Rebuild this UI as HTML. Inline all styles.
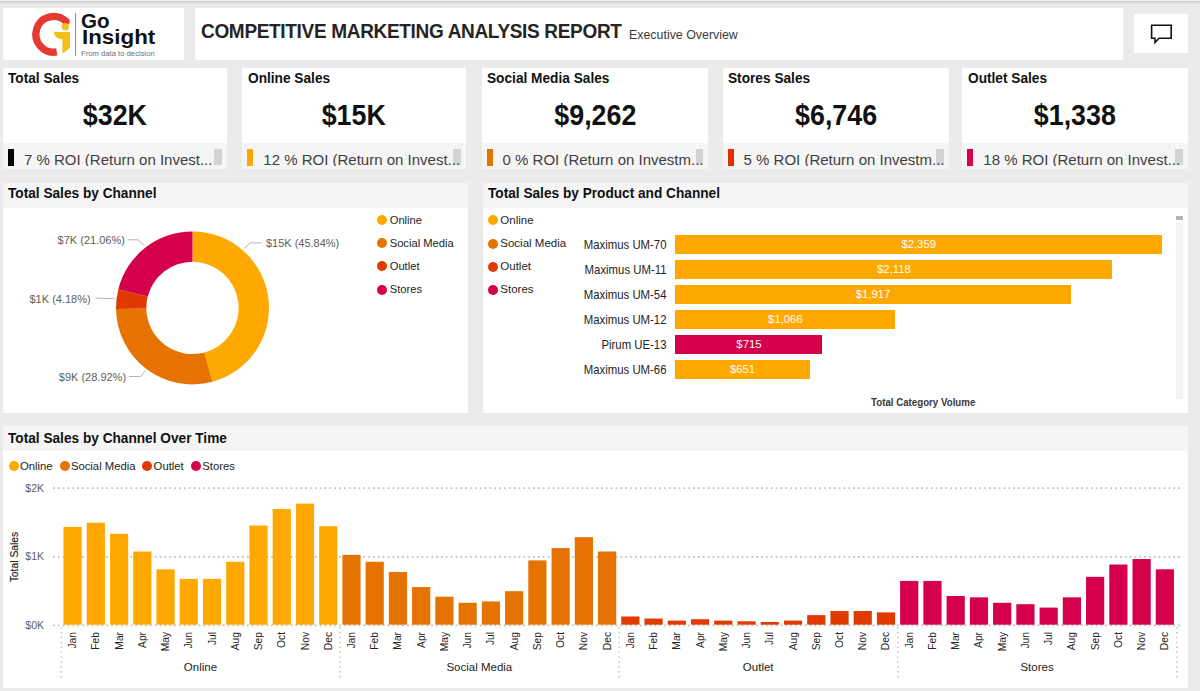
<!DOCTYPE html><html><head><meta charset="utf-8"><style>
*{margin:0;padding:0;box-sizing:border-box}
html,body{width:1200px;height:691px;overflow:hidden;background:#EBEBEB;font-family:"Liberation Sans", sans-serif;color:#252423}
.a{position:absolute}
.card{position:absolute;background:#fff}
.t{position:absolute;white-space:nowrap;line-height:1}
.b{font-weight:bold}
</style></head><body>
<div class="a" style="left:0;top:0;width:1200px;height:6px;background:linear-gradient(#f2f2f2 0px,#f2f2f2 1px,#cdcdcd 1px,#cdcdcd 2px,#dadada 2px,#dadada 3px,#e2e2e2 3px,#e2e2e2 4px,#e8e8e8 4px,#e8e8e8 5px,#EBEBEB 5px)"></div>

<div class="card" style="left:3px;top:8px;width:181px;height:52px"></div>
<svg class="a" style="left:0;top:0" width="200" height="70" viewBox="0 0 200 70">
<path d="M56.76 51.94 A17.85 17.85 0 1 1 66.03 21.4" fill="none" stroke="#E43A33" stroke-width="7.3"/>
<circle cx="66.03" cy="21.4" r="3.65" fill="#E43A33"/>
<circle cx="65.3" cy="26.7" r="3.65" fill="#F2C018"/>
<path d="M53.7 32.1 L70 32.1 L70 47.8 L62.4 53.75 L62.4 39.3 Q55 39.5 53.7 32.1 Z" fill="#F2C018"/>
<rect x="75.1" y="13.1" width="1" height="42.7" fill="#8a8a8a"/>
</svg>
<div class="t b" style="left:81px;top:10px;font-size:21px;color:#111;transform-origin:0 0;transform:scaleX(0.98)">Go</div>
<div class="t b" style="left:82px;top:26.5px;font-size:20.5px;color:#111;transform-origin:0 0;transform:scaleX(1.09)">Insight</div>
<div class="t" style="left:80.5px;top:50.8px;font-size:6.4px;color:#707070;transform-origin:0 0;transform:scaleX(1.2)">From data to decision</div>
<div class="card" style="left:195px;top:8px;width:928px;height:52px"></div>
<div class="t b" style="left:200.5px;top:21px;font-size:20px;color:#252423;letter-spacing:-0.35px;transform-origin:0 0;transform:scaleX(0.951)">COMPETITIVE MARKETING ANALYSIS REPORT</div>
<div class="t" style="left:629px;top:28.9px;font-size:12.4px;color:#3b3b3b">Executive Overview</div>
<div class="card" style="left:1134px;top:14px;width:54px;height:39px"></div>
<svg class="a" style="left:1140px;top:18px" width="40" height="30" viewBox="1140 18 40 30">
<path d="M1151.6 25.2 H1171.2 V38.2 H1159 L1155 42.5 V38.2 H1151.6 Z" fill="none" stroke="#111" stroke-width="1.6" stroke-linejoin="miter"/>
</svg>
<div class="card" style="left:3px;top:67.5px;width:223.8px;height:101.5px;overflow:hidden">
<div class="t b" style="left:5.3px;top:2.6px;font-size:15px;color:#111;transform-origin:0 0;transform:scaleX(0.912)">Total Sales</div>
<div class="t b" style="left:0;width:223.8px;text-align:center;top:33.75px;font-size:29px;color:#111;transform:scaleX(0.925)">$32K</div>
<div class="a" style="left:0;top:75.5px;width:223.8px;height:26px;background:#F5F5F5"></div>
<div class="a" style="left:5px;top:81px;width:6px;height:17px;background:#000"></div>
<div class="a" style="left:211.3px;top:81px;width:7.5px;height:16.5px;background:#d3d3d3"></div>
<div class="a" style="left:0;top:81px;width:223.8px;height:17.6px;overflow:hidden"><div class="t" style="left:21px;top:3px;font-size:15px;color:#404040">7 % ROI (Return on Invest...</div></div>
</div>
<div class="card" style="left:242.3px;top:67.5px;width:223.5px;height:101.5px;overflow:hidden">
<div class="t b" style="left:5.3px;top:2.6px;font-size:15px;color:#111;transform-origin:0 0;transform:scaleX(0.912)">Online Sales</div>
<div class="t b" style="left:0;width:223.5px;text-align:center;top:33.75px;font-size:29px;color:#111;transform:scaleX(0.925)">$15K</div>
<div class="a" style="left:0;top:75.5px;width:223.5px;height:26px;background:#F5F5F5"></div>
<div class="a" style="left:5px;top:81px;width:6px;height:17px;background:#FFA800"></div>
<div class="a" style="left:211.0px;top:81px;width:7.5px;height:16.5px;background:#d3d3d3"></div>
<div class="a" style="left:0;top:81px;width:223.5px;height:17.6px;overflow:hidden"><div class="t" style="left:21px;top:3px;font-size:15px;color:#404040">12 % ROI (Return on Invest...</div></div>
</div>
<div class="card" style="left:481.6px;top:67.5px;width:226.7px;height:101.5px;overflow:hidden">
<div class="t b" style="left:5.3px;top:2.6px;font-size:15px;color:#111;transform-origin:0 0;transform:scaleX(0.912)">Social Media Sales</div>
<div class="t b" style="left:0;width:226.7px;text-align:center;top:33.75px;font-size:29px;color:#111;transform:scaleX(0.925)">$9,262</div>
<div class="a" style="left:0;top:75.5px;width:226.7px;height:26px;background:#F5F5F5"></div>
<div class="a" style="left:5px;top:81px;width:6px;height:17px;background:#E67300"></div>
<div class="a" style="left:214.2px;top:81px;width:7.5px;height:16.5px;background:#d3d3d3"></div>
<div class="a" style="left:0;top:81px;width:226.7px;height:17.6px;overflow:hidden"><div class="t" style="left:21px;top:3px;font-size:15px;color:#404040">0 % ROI (Return on Investm...</div></div>
</div>
<div class="card" style="left:722.6px;top:67.5px;width:226.2px;height:101.5px;overflow:hidden">
<div class="t b" style="left:5.3px;top:2.6px;font-size:15px;color:#111;transform-origin:0 0;transform:scaleX(0.912)">Stores Sales</div>
<div class="t b" style="left:0;width:226.2px;text-align:center;top:33.75px;font-size:29px;color:#111;transform:scaleX(0.925)">$6,746</div>
<div class="a" style="left:0;top:75.5px;width:226.2px;height:26px;background:#F5F5F5"></div>
<div class="a" style="left:5px;top:81px;width:6px;height:17px;background:#E03000"></div>
<div class="a" style="left:213.7px;top:81px;width:7.5px;height:16.5px;background:#d3d3d3"></div>
<div class="a" style="left:0;top:81px;width:226.2px;height:17.6px;overflow:hidden"><div class="t" style="left:21px;top:3px;font-size:15px;color:#404040">5 % ROI (Return on Investm...</div></div>
</div>
<div class="card" style="left:962.3px;top:67.5px;width:225.7px;height:101.5px;overflow:hidden">
<div class="t b" style="left:5.3px;top:2.6px;font-size:15px;color:#111;transform-origin:0 0;transform:scaleX(0.912)">Outlet Sales</div>
<div class="t b" style="left:0;width:225.7px;text-align:center;top:33.75px;font-size:29px;color:#111;transform:scaleX(0.925)">$1,338</div>
<div class="a" style="left:0;top:75.5px;width:225.7px;height:26px;background:#F5F5F5"></div>
<div class="a" style="left:5px;top:81px;width:6px;height:17px;background:#D4004B"></div>
<div class="a" style="left:213.2px;top:81px;width:7.5px;height:16.5px;background:#d3d3d3"></div>
<div class="a" style="left:0;top:81px;width:225.7px;height:17.6px;overflow:hidden"><div class="t" style="left:21px;top:3px;font-size:15px;color:#404040">18 % ROI (Return on Invest...</div></div>
</div>
<div class="card" style="left:3px;top:183px;width:465.3px;height:229.7px"></div>
<div class="a" style="left:3px;top:183px;width:465.3px;height:25px;background:#F5F5F5"></div>
<div class="t b" style="left:7.8px;top:187.2px;font-size:13.8px;color:#111;transform-origin:0 0;transform:scaleX(0.99)">Total Sales by Channel</div>
<svg class="a" style="left:0;top:0" width="480" height="420">
<path d="M192.50 231.40 A76.5 76.5 0 0 1 212.27 381.80 L204.44 352.53 A46.2 46.2 0 0 0 192.50 261.70 Z" fill="#FFA800"/>
<path d="M212.27 381.80 A76.5 76.5 0 0 1 116.01 309.05 L146.31 308.60 A46.2 46.2 0 0 0 204.44 352.53 Z" fill="#E67300"/>
<path d="M116.01 309.05 A76.5 76.5 0 0 1 118.33 289.15 L147.71 296.58 A46.2 46.2 0 0 0 146.31 308.60 Z" fill="#E13A00"/>
<path d="M118.33 289.15 A76.5 76.5 0 0 1 192.50 231.40 L192.50 261.70 A46.2 46.2 0 0 0 147.71 296.58 Z" fill="#D4004B"/>
<polyline points="244.4,248.5 250,242.9 261.3,242.9" fill="none" stroke="#B3B3B3" stroke-width="1"/>
<polyline points="127.7,239.8 138,239.8 144.7,245.9" fill="none" stroke="#B3B3B3" stroke-width="1"/>
<polyline points="95.3,298 114.6,298.8" fill="none" stroke="#B3B3B3" stroke-width="1"/>
<polyline points="129,376.5 140.5,376.5 145.5,370.5" fill="none" stroke="#B3B3B3" stroke-width="1"/>
</svg>
<div class="t" style="left:265.9px;top:238px;font-size:11px;color:#605E5C">$15K (45.84%)</div>
<div class="t" style="left:57.6px;top:235px;font-size:11px;color:#605E5C">$7K (21.06%)</div>
<div class="t" style="left:29.5px;top:293.5px;font-size:11px;color:#605E5C">$1K (4.18%)</div>
<div class="t" style="left:58.8px;top:372px;font-size:11px;color:#605E5C">$9K (28.92%)</div>
<div class="a" style="left:377.25px;top:215.0px;width:10px;height:10px;border-radius:50%;background:#FFA800"></div>
<div class="t" style="left:389.7px;top:214.5px;font-size:11.2px;color:#252423">Online</div>
<div class="a" style="left:377.25px;top:238.2px;width:10px;height:10px;border-radius:50%;background:#E67300"></div>
<div class="t" style="left:389.7px;top:237.7px;font-size:11.2px;color:#252423">Social Media</div>
<div class="a" style="left:377.25px;top:261.4px;width:10px;height:10px;border-radius:50%;background:#E13A00"></div>
<div class="t" style="left:389.7px;top:260.9px;font-size:11.2px;color:#252423">Outlet</div>
<div class="a" style="left:377.25px;top:284.6px;width:10px;height:10px;border-radius:50%;background:#D4004B"></div>
<div class="t" style="left:389.7px;top:284.1px;font-size:11.2px;color:#252423">Stores</div>
<div class="card" style="left:482.5px;top:183px;width:705.5px;height:229.8px"></div>
<div class="a" style="left:482.5px;top:183px;width:705.5px;height:25px;background:#F5F5F5"></div>
<div class="t b" style="left:487.5px;top:187px;font-size:13.8px;color:#111;transform-origin:0 0;transform:scaleX(0.99)">Total Sales by Product and Channel</div>
<div class="a" style="left:488.4px;top:215.2px;width:10px;height:10px;border-radius:50%;background:#FFA800"></div>
<div class="t" style="left:500.3px;top:214.5px;font-size:11.5px;color:#252423">Online</div>
<div class="a" style="left:488.4px;top:238.5px;width:10px;height:10px;border-radius:50%;background:#E67300"></div>
<div class="t" style="left:500.3px;top:237.8px;font-size:11.5px;color:#252423">Social Media</div>
<div class="a" style="left:488.4px;top:261.8px;width:10px;height:10px;border-radius:50%;background:#E13A00"></div>
<div class="t" style="left:500.3px;top:261.1px;font-size:11.5px;color:#252423">Outlet</div>
<div class="a" style="left:488.4px;top:285.1px;width:10px;height:10px;border-radius:50%;background:#D4004B"></div>
<div class="t" style="left:500.3px;top:284.40000000000003px;font-size:11.5px;color:#252423">Stores</div>
<div class="a" style="left:675.4px;top:234.7px;width:486.6px;height:19px;background:#FFA800"></div>
<div class="t" style="left:500px;width:166.5px;text-align:right;top:238.6px;font-size:12.1px;color:#252423;transform-origin:100% 50%;transform:scaleX(0.94)">Maximus UM-70</div>
<div class="t" style="left:675.4px;width:486.6px;text-align:center;top:239.29999999999998px;font-size:11.3px;color:#fff">$2,359</div>
<div class="a" style="left:675.4px;top:259.7px;width:437.1px;height:19px;background:#FFA800"></div>
<div class="t" style="left:500px;width:166.5px;text-align:right;top:263.59999999999997px;font-size:12.1px;color:#252423;transform-origin:100% 50%;transform:scaleX(0.94)">Maximus UM-11</div>
<div class="t" style="left:675.4px;width:437.1px;text-align:center;top:264.3px;font-size:11.3px;color:#fff">$2,118</div>
<div class="a" style="left:675.4px;top:284.7px;width:395.4px;height:19px;background:#FFA800"></div>
<div class="t" style="left:500px;width:166.5px;text-align:right;top:288.59999999999997px;font-size:12.1px;color:#252423;transform-origin:100% 50%;transform:scaleX(0.94)">Maximus UM-54</div>
<div class="t" style="left:675.4px;width:395.4px;text-align:center;top:289.3px;font-size:11.3px;color:#fff">$1,917</div>
<div class="a" style="left:675.4px;top:309.7px;width:220.0px;height:19px;background:#FFA800"></div>
<div class="t" style="left:500px;width:166.5px;text-align:right;top:313.59999999999997px;font-size:12.1px;color:#252423;transform-origin:100% 50%;transform:scaleX(0.94)">Maximus UM-12</div>
<div class="t" style="left:675.4px;width:220.0px;text-align:center;top:314.3px;font-size:11.3px;color:#fff">$1,066</div>
<div class="a" style="left:675.4px;top:334.7px;width:147.10000000000002px;height:19px;background:#D4004B"></div>
<div class="t" style="left:500px;width:166.5px;text-align:right;top:338.59999999999997px;font-size:12.1px;color:#252423;transform-origin:100% 50%;transform:scaleX(0.94)">Pirum UE-13</div>
<div class="t" style="left:675.4px;width:147.10000000000002px;text-align:center;top:339.3px;font-size:11.3px;color:#fff">$715</div>
<div class="a" style="left:675.4px;top:359.7px;width:134.20000000000005px;height:19px;background:#FFA800"></div>
<div class="t" style="left:500px;width:166.5px;text-align:right;top:363.59999999999997px;font-size:12.1px;color:#252423;transform-origin:100% 50%;transform:scaleX(0.94)">Maximus UM-66</div>
<div class="t" style="left:675.4px;width:134.20000000000005px;text-align:center;top:364.3px;font-size:11.3px;color:#fff">$651</div>
<div class="a" style="left:1176px;top:221.6px;width:7.4px;height:177.4px;background:#f3f3f3"></div>
<div class="a" style="left:1175.9px;top:216px;width:7.5px;height:4px;background:#b6b6b6"></div>
<div class="a" style="left:860px;top:390px;width:130px;height:17.6px;overflow:hidden"><div class="t b" style="left:11px;top:7px;font-size:10.5px;color:#3a3a3a;transform-origin:0 0;transform:scaleX(0.925)">Total Category Volume</div></div>
<div class="card" style="left:3px;top:426.4px;width:1185px;height:261.6px"></div>
<div class="a" style="left:3px;top:426.4px;width:1185px;height:24.6px;background:#F5F5F5"></div>
<div class="t b" style="left:7.8px;top:431.7px;font-size:13.8px;color:#111;transform-origin:0 0;transform:scaleX(0.99)">Total Sales by Channel Over Time</div>
<div class="a" style="left:9px;top:460.7px;width:10px;height:10px;border-radius:50%;background:#FFA800"></div>
<div class="t" style="left:20px;top:461.2px;font-size:11.3px;color:#252423">Online</div>
<div class="a" style="left:59.599999999999994px;top:460.7px;width:10px;height:10px;border-radius:50%;background:#E67300"></div>
<div class="t" style="left:70.9px;top:461.2px;font-size:11.3px;color:#252423">Social Media</div>
<div class="a" style="left:141.6px;top:460.7px;width:10px;height:10px;border-radius:50%;background:#E13A00"></div>
<div class="t" style="left:153.6px;top:461.2px;font-size:11.3px;color:#252423">Outlet</div>
<div class="a" style="left:190.6px;top:460.7px;width:10px;height:10px;border-radius:50%;background:#D4004B"></div>
<div class="t" style="left:202.3px;top:461.2px;font-size:11.3px;color:#252423">Stores</div>
<svg class="a" style="left:0;top:0" width="1200" height="691">
<line x1="53" y1="625.4" x2="1183" y2="625.4" stroke="#BDBDBD" stroke-width="1.7" stroke-dasharray="1.7 3.15"/>
<line x1="53" y1="556.8" x2="1183" y2="556.8" stroke="#BDBDBD" stroke-width="1.7" stroke-dasharray="1.7 3.15"/>
<line x1="53" y1="488.1" x2="1183" y2="488.1" stroke="#BDBDBD" stroke-width="1.7" stroke-dasharray="1.7 3.15"/>
<rect x="63.50" y="526.89" width="18.2" height="97.81" fill="#FFA800"/>
<rect x="86.74" y="522.78" width="18.2" height="101.92" fill="#FFA800"/>
<rect x="109.98" y="533.73" width="18.2" height="90.97" fill="#FFA800"/>
<rect x="133.22" y="551.51" width="18.2" height="73.19" fill="#FFA800"/>
<rect x="156.46" y="569.30" width="18.2" height="55.40" fill="#FFA800"/>
<rect x="179.70" y="578.87" width="18.2" height="45.83" fill="#FFA800"/>
<rect x="202.94" y="578.87" width="18.2" height="45.83" fill="#FFA800"/>
<rect x="226.18" y="561.77" width="18.2" height="62.93" fill="#FFA800"/>
<rect x="249.42" y="525.52" width="18.2" height="99.18" fill="#FFA800"/>
<rect x="272.66" y="509.10" width="18.2" height="115.60" fill="#FFA800"/>
<rect x="295.90" y="503.63" width="18.2" height="121.07" fill="#FFA800"/>
<rect x="319.14" y="526.20" width="18.2" height="98.50" fill="#FFA800"/>
<rect x="342.38" y="554.93" width="18.2" height="69.77" fill="#E67300"/>
<rect x="365.61" y="561.77" width="18.2" height="62.93" fill="#E67300"/>
<rect x="388.85" y="572.03" width="18.2" height="52.67" fill="#E67300"/>
<rect x="412.09" y="587.08" width="18.2" height="37.62" fill="#E67300"/>
<rect x="435.33" y="596.66" width="18.2" height="28.04" fill="#E67300"/>
<rect x="458.57" y="602.81" width="18.2" height="21.89" fill="#E67300"/>
<rect x="481.81" y="601.44" width="18.2" height="23.26" fill="#E67300"/>
<rect x="505.05" y="591.18" width="18.2" height="33.52" fill="#E67300"/>
<rect x="528.29" y="560.40" width="18.2" height="64.30" fill="#E67300"/>
<rect x="551.53" y="548.09" width="18.2" height="76.61" fill="#E67300"/>
<rect x="574.77" y="537.15" width="18.2" height="87.55" fill="#E67300"/>
<rect x="598.01" y="551.51" width="18.2" height="73.19" fill="#E67300"/>
<rect x="621.25" y="616.49" width="18.2" height="8.21" fill="#E13A00"/>
<rect x="644.49" y="618.54" width="18.2" height="6.16" fill="#E13A00"/>
<rect x="667.73" y="620.60" width="18.2" height="4.10" fill="#E13A00"/>
<rect x="690.97" y="619.23" width="18.2" height="5.47" fill="#E13A00"/>
<rect x="714.21" y="620.60" width="18.2" height="4.10" fill="#E13A00"/>
<rect x="737.45" y="621.28" width="18.2" height="3.42" fill="#E13A00"/>
<rect x="760.69" y="621.96" width="18.2" height="2.74" fill="#E13A00"/>
<rect x="783.93" y="620.60" width="18.2" height="4.10" fill="#E13A00"/>
<rect x="807.17" y="615.12" width="18.2" height="9.58" fill="#E13A00"/>
<rect x="830.41" y="611.02" width="18.2" height="13.68" fill="#E13A00"/>
<rect x="853.65" y="611.02" width="18.2" height="13.68" fill="#E13A00"/>
<rect x="876.89" y="612.39" width="18.2" height="12.31" fill="#E13A00"/>
<rect x="900.12" y="580.92" width="18.2" height="43.78" fill="#D4004B"/>
<rect x="923.36" y="580.92" width="18.2" height="43.78" fill="#D4004B"/>
<rect x="946.60" y="595.97" width="18.2" height="28.73" fill="#D4004B"/>
<rect x="969.84" y="597.34" width="18.2" height="27.36" fill="#D4004B"/>
<rect x="993.08" y="602.81" width="18.2" height="21.89" fill="#D4004B"/>
<rect x="1016.32" y="604.18" width="18.2" height="20.52" fill="#D4004B"/>
<rect x="1039.56" y="607.60" width="18.2" height="17.10" fill="#D4004B"/>
<rect x="1062.80" y="597.34" width="18.2" height="27.36" fill="#D4004B"/>
<rect x="1086.04" y="576.82" width="18.2" height="47.88" fill="#D4004B"/>
<rect x="1109.28" y="564.51" width="18.2" height="60.19" fill="#D4004B"/>
<rect x="1132.52" y="559.04" width="18.2" height="65.66" fill="#D4004B"/>
<rect x="1155.76" y="569.30" width="18.2" height="55.40" fill="#D4004B"/>
<line x1="61.3" y1="627" x2="61.3" y2="679" stroke="#C4C4C4" stroke-width="1.5" stroke-dasharray="1.5 3.4"/>
<line x1="340.2" y1="627" x2="340.2" y2="679" stroke="#C4C4C4" stroke-width="1.5" stroke-dasharray="1.5 3.4"/>
<line x1="619.0" y1="627" x2="619.0" y2="679" stroke="#C4C4C4" stroke-width="1.5" stroke-dasharray="1.5 3.4"/>
<line x1="897.9" y1="627" x2="897.9" y2="679" stroke="#C4C4C4" stroke-width="1.5" stroke-dasharray="1.5 3.4"/>
<line x1="1176.8" y1="627" x2="1176.8" y2="679" stroke="#C4C4C4" stroke-width="1.5" stroke-dasharray="1.5 3.4"/>
</svg>
<div class="t" style="left:32.10px;top:624.50px;width:40px;height:14px;font-size:11px;color:#252423;transform:rotate(-90deg) scaleX(0.93);transform-origin:40px 7.0px;text-align:right;line-height:14px;">Jan</div>
<div class="t" style="left:55.34px;top:624.50px;width:40px;height:14px;font-size:11px;color:#252423;transform:rotate(-90deg) scaleX(0.93);transform-origin:40px 7.0px;text-align:right;line-height:14px;">Feb</div>
<div class="t" style="left:78.58px;top:624.50px;width:40px;height:14px;font-size:11px;color:#252423;transform:rotate(-90deg) scaleX(0.93);transform-origin:40px 7.0px;text-align:right;line-height:14px;">Mar</div>
<div class="t" style="left:101.82px;top:624.50px;width:40px;height:14px;font-size:11px;color:#252423;transform:rotate(-90deg) scaleX(0.93);transform-origin:40px 7.0px;text-align:right;line-height:14px;">Apr</div>
<div class="t" style="left:125.06px;top:624.50px;width:40px;height:14px;font-size:11px;color:#252423;transform:rotate(-90deg) scaleX(0.93);transform-origin:40px 7.0px;text-align:right;line-height:14px;">May</div>
<div class="t" style="left:148.30px;top:624.50px;width:40px;height:14px;font-size:11px;color:#252423;transform:rotate(-90deg) scaleX(0.93);transform-origin:40px 7.0px;text-align:right;line-height:14px;">Jun</div>
<div class="t" style="left:171.54px;top:624.50px;width:40px;height:14px;font-size:11px;color:#252423;transform:rotate(-90deg) scaleX(0.93);transform-origin:40px 7.0px;text-align:right;line-height:14px;">Jul</div>
<div class="t" style="left:194.78px;top:624.50px;width:40px;height:14px;font-size:11px;color:#252423;transform:rotate(-90deg) scaleX(0.93);transform-origin:40px 7.0px;text-align:right;line-height:14px;">Aug</div>
<div class="t" style="left:218.02px;top:624.50px;width:40px;height:14px;font-size:11px;color:#252423;transform:rotate(-90deg) scaleX(0.93);transform-origin:40px 7.0px;text-align:right;line-height:14px;">Sep</div>
<div class="t" style="left:241.26px;top:624.50px;width:40px;height:14px;font-size:11px;color:#252423;transform:rotate(-90deg) scaleX(0.93);transform-origin:40px 7.0px;text-align:right;line-height:14px;">Oct</div>
<div class="t" style="left:264.50px;top:624.50px;width:40px;height:14px;font-size:11px;color:#252423;transform:rotate(-90deg) scaleX(0.93);transform-origin:40px 7.0px;text-align:right;line-height:14px;">Nov</div>
<div class="t" style="left:287.74px;top:624.50px;width:40px;height:14px;font-size:11px;color:#252423;transform:rotate(-90deg) scaleX(0.93);transform-origin:40px 7.0px;text-align:right;line-height:14px;">Dec</div>
<div class="t" style="left:310.98px;top:624.50px;width:40px;height:14px;font-size:11px;color:#252423;transform:rotate(-90deg) scaleX(0.93);transform-origin:40px 7.0px;text-align:right;line-height:14px;">Jan</div>
<div class="t" style="left:334.21px;top:624.50px;width:40px;height:14px;font-size:11px;color:#252423;transform:rotate(-90deg) scaleX(0.93);transform-origin:40px 7.0px;text-align:right;line-height:14px;">Feb</div>
<div class="t" style="left:357.45px;top:624.50px;width:40px;height:14px;font-size:11px;color:#252423;transform:rotate(-90deg) scaleX(0.93);transform-origin:40px 7.0px;text-align:right;line-height:14px;">Mar</div>
<div class="t" style="left:380.69px;top:624.50px;width:40px;height:14px;font-size:11px;color:#252423;transform:rotate(-90deg) scaleX(0.93);transform-origin:40px 7.0px;text-align:right;line-height:14px;">Apr</div>
<div class="t" style="left:403.93px;top:624.50px;width:40px;height:14px;font-size:11px;color:#252423;transform:rotate(-90deg) scaleX(0.93);transform-origin:40px 7.0px;text-align:right;line-height:14px;">May</div>
<div class="t" style="left:427.17px;top:624.50px;width:40px;height:14px;font-size:11px;color:#252423;transform:rotate(-90deg) scaleX(0.93);transform-origin:40px 7.0px;text-align:right;line-height:14px;">Jun</div>
<div class="t" style="left:450.41px;top:624.50px;width:40px;height:14px;font-size:11px;color:#252423;transform:rotate(-90deg) scaleX(0.93);transform-origin:40px 7.0px;text-align:right;line-height:14px;">Jul</div>
<div class="t" style="left:473.65px;top:624.50px;width:40px;height:14px;font-size:11px;color:#252423;transform:rotate(-90deg) scaleX(0.93);transform-origin:40px 7.0px;text-align:right;line-height:14px;">Aug</div>
<div class="t" style="left:496.89px;top:624.50px;width:40px;height:14px;font-size:11px;color:#252423;transform:rotate(-90deg) scaleX(0.93);transform-origin:40px 7.0px;text-align:right;line-height:14px;">Sep</div>
<div class="t" style="left:520.13px;top:624.50px;width:40px;height:14px;font-size:11px;color:#252423;transform:rotate(-90deg) scaleX(0.93);transform-origin:40px 7.0px;text-align:right;line-height:14px;">Oct</div>
<div class="t" style="left:543.37px;top:624.50px;width:40px;height:14px;font-size:11px;color:#252423;transform:rotate(-90deg) scaleX(0.93);transform-origin:40px 7.0px;text-align:right;line-height:14px;">Nov</div>
<div class="t" style="left:566.61px;top:624.50px;width:40px;height:14px;font-size:11px;color:#252423;transform:rotate(-90deg) scaleX(0.93);transform-origin:40px 7.0px;text-align:right;line-height:14px;">Dec</div>
<div class="t" style="left:589.85px;top:624.50px;width:40px;height:14px;font-size:11px;color:#252423;transform:rotate(-90deg) scaleX(0.93);transform-origin:40px 7.0px;text-align:right;line-height:14px;">Jan</div>
<div class="t" style="left:613.09px;top:624.50px;width:40px;height:14px;font-size:11px;color:#252423;transform:rotate(-90deg) scaleX(0.93);transform-origin:40px 7.0px;text-align:right;line-height:14px;">Feb</div>
<div class="t" style="left:636.33px;top:624.50px;width:40px;height:14px;font-size:11px;color:#252423;transform:rotate(-90deg) scaleX(0.93);transform-origin:40px 7.0px;text-align:right;line-height:14px;">Mar</div>
<div class="t" style="left:659.57px;top:624.50px;width:40px;height:14px;font-size:11px;color:#252423;transform:rotate(-90deg) scaleX(0.93);transform-origin:40px 7.0px;text-align:right;line-height:14px;">Apr</div>
<div class="t" style="left:682.81px;top:624.50px;width:40px;height:14px;font-size:11px;color:#252423;transform:rotate(-90deg) scaleX(0.93);transform-origin:40px 7.0px;text-align:right;line-height:14px;">May</div>
<div class="t" style="left:706.05px;top:624.50px;width:40px;height:14px;font-size:11px;color:#252423;transform:rotate(-90deg) scaleX(0.93);transform-origin:40px 7.0px;text-align:right;line-height:14px;">Jun</div>
<div class="t" style="left:729.29px;top:624.50px;width:40px;height:14px;font-size:11px;color:#252423;transform:rotate(-90deg) scaleX(0.93);transform-origin:40px 7.0px;text-align:right;line-height:14px;">Jul</div>
<div class="t" style="left:752.53px;top:624.50px;width:40px;height:14px;font-size:11px;color:#252423;transform:rotate(-90deg) scaleX(0.93);transform-origin:40px 7.0px;text-align:right;line-height:14px;">Aug</div>
<div class="t" style="left:775.77px;top:624.50px;width:40px;height:14px;font-size:11px;color:#252423;transform:rotate(-90deg) scaleX(0.93);transform-origin:40px 7.0px;text-align:right;line-height:14px;">Sep</div>
<div class="t" style="left:799.01px;top:624.50px;width:40px;height:14px;font-size:11px;color:#252423;transform:rotate(-90deg) scaleX(0.93);transform-origin:40px 7.0px;text-align:right;line-height:14px;">Oct</div>
<div class="t" style="left:822.25px;top:624.50px;width:40px;height:14px;font-size:11px;color:#252423;transform:rotate(-90deg) scaleX(0.93);transform-origin:40px 7.0px;text-align:right;line-height:14px;">Nov</div>
<div class="t" style="left:845.49px;top:624.50px;width:40px;height:14px;font-size:11px;color:#252423;transform:rotate(-90deg) scaleX(0.93);transform-origin:40px 7.0px;text-align:right;line-height:14px;">Dec</div>
<div class="t" style="left:868.73px;top:624.50px;width:40px;height:14px;font-size:11px;color:#252423;transform:rotate(-90deg) scaleX(0.93);transform-origin:40px 7.0px;text-align:right;line-height:14px;">Jan</div>
<div class="t" style="left:891.96px;top:624.50px;width:40px;height:14px;font-size:11px;color:#252423;transform:rotate(-90deg) scaleX(0.93);transform-origin:40px 7.0px;text-align:right;line-height:14px;">Feb</div>
<div class="t" style="left:915.20px;top:624.50px;width:40px;height:14px;font-size:11px;color:#252423;transform:rotate(-90deg) scaleX(0.93);transform-origin:40px 7.0px;text-align:right;line-height:14px;">Mar</div>
<div class="t" style="left:938.44px;top:624.50px;width:40px;height:14px;font-size:11px;color:#252423;transform:rotate(-90deg) scaleX(0.93);transform-origin:40px 7.0px;text-align:right;line-height:14px;">Apr</div>
<div class="t" style="left:961.68px;top:624.50px;width:40px;height:14px;font-size:11px;color:#252423;transform:rotate(-90deg) scaleX(0.93);transform-origin:40px 7.0px;text-align:right;line-height:14px;">May</div>
<div class="t" style="left:984.92px;top:624.50px;width:40px;height:14px;font-size:11px;color:#252423;transform:rotate(-90deg) scaleX(0.93);transform-origin:40px 7.0px;text-align:right;line-height:14px;">Jun</div>
<div class="t" style="left:1008.16px;top:624.50px;width:40px;height:14px;font-size:11px;color:#252423;transform:rotate(-90deg) scaleX(0.93);transform-origin:40px 7.0px;text-align:right;line-height:14px;">Jul</div>
<div class="t" style="left:1031.40px;top:624.50px;width:40px;height:14px;font-size:11px;color:#252423;transform:rotate(-90deg) scaleX(0.93);transform-origin:40px 7.0px;text-align:right;line-height:14px;">Aug</div>
<div class="t" style="left:1054.64px;top:624.50px;width:40px;height:14px;font-size:11px;color:#252423;transform:rotate(-90deg) scaleX(0.93);transform-origin:40px 7.0px;text-align:right;line-height:14px;">Sep</div>
<div class="t" style="left:1077.88px;top:624.50px;width:40px;height:14px;font-size:11px;color:#252423;transform:rotate(-90deg) scaleX(0.93);transform-origin:40px 7.0px;text-align:right;line-height:14px;">Oct</div>
<div class="t" style="left:1101.12px;top:624.50px;width:40px;height:14px;font-size:11px;color:#252423;transform:rotate(-90deg) scaleX(0.93);transform-origin:40px 7.0px;text-align:right;line-height:14px;">Nov</div>
<div class="t" style="left:1124.36px;top:624.50px;width:40px;height:14px;font-size:11px;color:#252423;transform:rotate(-90deg) scaleX(0.93);transform-origin:40px 7.0px;text-align:right;line-height:14px;">Dec</div>
<div class="t" style="left:0;width:44.2px;text-align:right;top:619.7px;font-size:11.8px;color:#605E5C;transform-origin:100% 50%;transform:scaleX(0.9)">$0K</div>
<div class="t" style="left:0;width:44.2px;text-align:right;top:551.3000000000001px;font-size:11.8px;color:#605E5C;transform-origin:100% 50%;transform:scaleX(0.9)">$1K</div>
<div class="t" style="left:0;width:44.2px;text-align:right;top:482.90000000000003px;font-size:11.8px;color:#605E5C;transform-origin:100% 50%;transform:scaleX(0.9)">$2K</div>
<div class="a" style="left:14.65px;top:557.15px;width:0;height:0"><div class="t" style="left:0;top:0;font-size:10.35px;color:#252423;transform:translate(-50%,-50%) rotate(-90deg);-webkit-text-stroke:0.15px #252423">Total Sales</div></div>
<div class="t" style="left:140.4375px;width:120px;text-align:center;top:661.5px;font-size:11.5px;color:#252423">Online</div>
<div class="t" style="left:419.3125px;width:120px;text-align:center;top:661.5px;font-size:11.5px;color:#252423">Social Media</div>
<div class="t" style="left:698.1875px;width:120px;text-align:center;top:661.5px;font-size:11.5px;color:#252423">Outlet</div>
<div class="t" style="left:977.0625px;width:120px;text-align:center;top:661.5px;font-size:11.5px;color:#252423">Stores</div>
</body></html>
